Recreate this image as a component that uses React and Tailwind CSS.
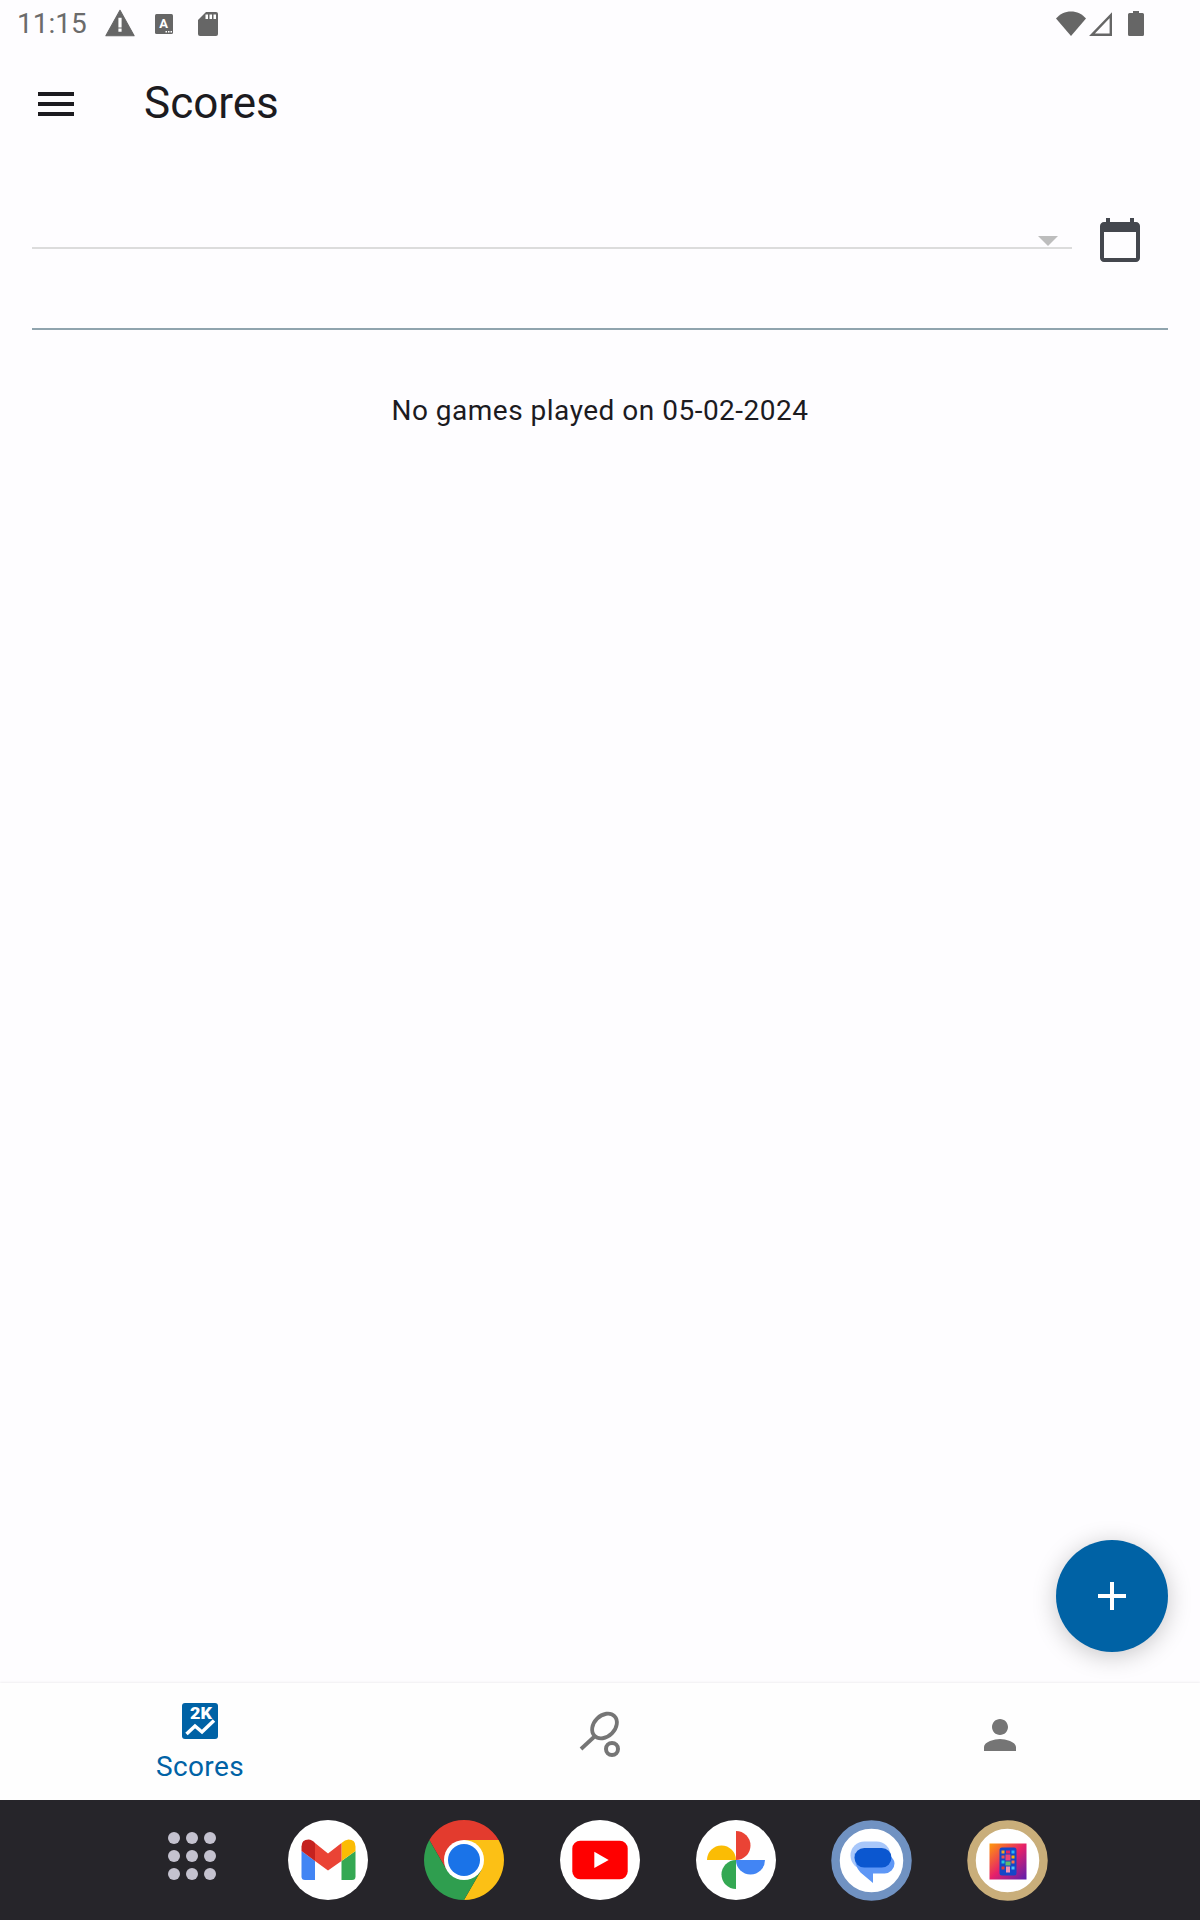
import React from "react";

// status bar icons
const StatusLeft = () => (
  <div className="flex items-center h-12 pl-[17px] text-[28px] text-[#6b6b6b]">
    <span className="w-[87px] leading-none">11:15</span>
    <svg width="32" height="32" viewBox="0 0 24 24" className="-mt-[3px]" fill="#666">
      <path stroke="#666" strokeLinejoin="round" strokeWidth="0.8" d="M1.400 21.600h21.200L12 2.400z" />
      <path fill="#fff" d="M10.800 8h2.400v7.400h-2.400zM10.800 16.200h2.400v2.400h-2.400z" />
    </svg>
    <svg width="18" height="20" viewBox="0 0 18 20" className="ml-[19px]">
      <rect width="18" height="20" rx="1.500" fill="#666" />
      <text x="8.500" y="14" fontSize="13" fontWeight="700" textAnchor="middle" fill="#fff" fontFamily="Roboto">A</text>
      <path fill="#fff" d="M10.500 17h1.500v1.500h-1.500zM13 17h1.500v1.500H13zM15.500 17h1.500v1.500h-1.500z" />
    </svg>
    <svg width="20" height="24" viewBox="0 0 20 24" className="ml-[25px]">
      <path fill="#666" d="M8 0h10a2 2 0 0 1 2 2v20a2 2 0 0 1-2 2H2a2 2 0 0 1-2-2V8z" />
      <path fill="#fff" d="M7.500 2.500h2.500V7H7.500zM11.500 2.500h2.500V7h-2.500zM15.500 2.500h2.500V7h-2.500z" />
    </svg>
  </div>
);

const StatusRight = () => (
  <div className="flex items-center h-12 pr-[56px]">
    <svg width="30" height="25" viewBox="0 0 30 25" className="-mt-[1px]">
      <path fill="#666" d="M0 7.500C4 3 9 0.500 15 0.500S26 3 30 7.500L15 25z" />
    </svg>
    <svg width="24" height="24" viewBox="0 0 24 24" className="ml-[3px]">
      <path fill="none" stroke="#666" strokeWidth="2.400" d="M21.800 3.200V22.800H2.900z" />
    </svg>
    <svg width="16" height="25" viewBox="0 0 16 25" className="ml-[15px] -mt-[1px]">
      <path fill="#666" d="M5 0h6v2h3.500A1.500 1.500 0 0 1 16 3.500V23.500A1.500 1.500 0 0 1 14.500 25H1.500A1.500 1.500 0 0 1 0 23.500V3.500A1.500 1.500 0 0 1 1.500 2H5z" />
    </svg>
  </div>
);

const DockIcon = ({ children, ringed }) => (
  <svg
    width={ringed ? 81 : 80}
    height={ringed ? 81 : 80}
    viewBox={ringed ? "-0.5 -0.5 81 81" : "0 0 80 80"}
    className={ringed ? "shrink-0 -ml-px" : "shrink-0"}
  >
    {children}
  </svg>
);

const Gmail = () => (
  <DockIcon>
    <circle cx="40" cy="40" r="40" fill="#fff" />
    <path fill="#4285f4" d="M13.500 31L27 41V60H17Q13.500 60 13.500 56.500z" />
    <path fill="#34a853" d="M53.500 41L67.500 31V56.500Q67.500 60 64 60H53.500z" />
    <path fill="#fbbc04" d="M53.500 23Q57 19.500 60.500 19.500Q67.500 19.500 67.500 26.500V31L53.500 41z" />
    <path fill="#c5221f" d="M13.500 31V26.500Q13.500 19.500 20.500 19.500Q24 19.500 27 23V41z" />
    <path fill="#ea4335" d="M27 23L40 33.500L53.500 23V41L40 50.500L27 41z" />
  </DockIcon>
);

const Chrome = () => (
  <DockIcon>
    <path fill="#e33b2e" d="M5.360 20A40 40 0 0 1 74.640 20H40L22.700 50z" />
    <path fill="#fcc015" d="M74.640 20A40 40 0 0 1 40 80L57.300 50L40 20z" />
    <path fill="#2f9e4f" d="M40 80A40 40 0 0 1 5.360 20L22.700 50H57.300z" />
    <circle cx="40" cy="40" r="20" fill="#fff" />
    <circle cx="40" cy="40" r="16" fill="#1a73e8" />
  </DockIcon>
);

const Youtube = () => (
  <DockIcon>
    <circle cx="40" cy="40" r="40" fill="#fff" />
    <rect x="12.300" y="20.700" width="55.400" height="38.600" rx="8" fill="#ff0000" />
    <path fill="#fff" d="M34.300 31.700L48.700 40L34.300 48z" />
  </DockIcon>
);

const Photos = () => (
  <DockIcon>
    <circle cx="40" cy="40" r="40" fill="#fff" />
    <path fill="#ea4335" d="M40 11A14.500 14.500 0 0 1 40 40z" />
    <path fill="#4285f4" d="M69 40A14.500 14.500 0 0 1 40 40z" />
    <path fill="#34a853" d="M40 69A14.500 14.500 0 0 1 40 40z" />
    <path fill="#fbbc04" d="M11 40A14.500 14.500 0 0 1 40 40z" />
  </DockIcon>
);

const Messages = () => (
  <DockIcon ringed>
    <circle cx="40" cy="40" r="36" fill="#fff" stroke="#7092c2" strokeWidth="8.500" />
    <rect x="19" y="21" width="40" height="28" rx="14" fill="#a8c7fa" />
    <path fill="#5e97f6" d="M23 33H49A14 10 0 0 1 63 43A10 10 0 0 1 53 53H41.500V62.500L29 52Q23 46 23 33z" />
    <rect x="23" y="27.500" width="37" height="19.500" rx="9.750" fill="#0b57d0" />
  </DockIcon>
);

const PhoneApp = () => (
  <DockIcon ringed>
    <defs>
      <linearGradient id="appBg" x1="0" y1="0" x2="1" y2="1">
        <stop offset="0" stopColor="#ff9a0a" />
        <stop offset="0.5" stopColor="#e6206a" />
        <stop offset="1" stopColor="#5a1fb0" />
      </linearGradient>
    </defs>
    <circle cx="40" cy="40" r="36" fill="#fff" stroke="#c9ae7a" strokeWidth="8.500" />
    <rect x="22" y="23" width="37" height="36" fill="url(#appBg)" />
    <rect x="32" y="27" width="17" height="28" rx="2.500" fill="#1546c8" />
    <rect x="34" y="30" width="3" height="3" fill="#f5a623" />
    <rect x="38.500" y="30" width="4" height="3" fill="#e91e63" />
    <rect x="44" y="30" width="3" height="3" fill="#29b6f6" />
    <rect x="34" y="35" width="3" height="3" fill="#ef5350" />
    <rect x="38" y="34" width="5" height="6" fill="#ec407a" />
    <rect x="44" y="35" width="3" height="3" fill="#ffb300" />
    <rect x="34" y="40" width="3" height="3" fill="#26c6da" />
    <rect x="38" y="41" width="5" height="4" fill="#66bb6a" />
    <rect x="44" y="40" width="3" height="3" fill="#ff7043" />
    <rect x="34" y="46" width="3" height="3" fill="#e53935" />
    <rect x="38.500" y="46" width="4" height="6" fill="#f48fb1" />
    <rect x="44" y="46" width="3" height="3" fill="#4fc3f7" />
  </DockIcon>
);

export default function App() {
  return (
    <div className="flex flex-col w-[1200px] h-[1920px] bg-[#fefdff] font-['Roboto',sans-serif] text-[#1c1b1f] overflow-hidden">
      <div className="flex justify-between shrink-0">
        <StatusLeft />
        <StatusRight />
      </div>

      {/* app bar */}
      <div className="flex items-center h-28 pl-8 shrink-0">
        <svg width="48" height="48" viewBox="0 0 24 24" fill="#1c1b1f">
          <path d="M3 18h18v-2H3v2zm0-5h18v-2H3v2zm0-7v2h18V6H3z" />
        </svg>
        <h1 className="ml-16 -mt-[2px] text-[44px] font-normal leading-none">Scores</h1>
      </div>

      <div className="relative flex-1 px-8">
        {/* date picker row */}
        <div className="flex items-start pt-14">
          <div className="flex items-end justify-end w-[1040px] h-[33px] pr-[14px] pb-px border-b-2 border-[#dcdcdc]">
            <svg width="20" height="10" viewBox="0 0 20 10">
              <path fill="#bdbdbd" d="M0 0h20L10 10z" />
            </svg>
          </div>
          <svg width="48" height="48" viewBox="0 0 24 24" fill="#44474e" className="ml-6">
            <path d="M20 3h-1V1h-2v2H7V1H5v2H4c-1.100 0-2 .9-2 2v16c0 1.100.9 2 2 2h16c1.100 0 2-.9 2-2V5c0-1.100-.9-2-2-2zm0 18H4V8h16v13z" />
          </svg>
        </div>
        <div className="h-0.5 mt-16 bg-[#90a4ae]" />

        <p className="mt-[63px] text-center text-[28px] leading-9 tracking-[0.5px]">No games played on 05-02-2024</p>

        <button className="absolute right-8 bottom-[31px] flex items-center justify-center w-28 h-28 rounded-full bg-[#0062a5] shadow-[0_4px_24px_rgba(0,0,0,0.22)]">
          <svg width="48" height="48" viewBox="0 0 24 24" fill="#fff">
            <path d="M19 13h-6v6h-2v-6H5v-2h6V5h2v6h6v2z" />
          </svg>
        </button>
      </div>

      {/* bottom nav */}
      <div className="grid grid-cols-3 h-[117px] shrink-0 bg-[#fefefe] shadow-[0_-1px_2px_rgba(0,0,0,0.06)]">
        <div className="flex flex-col items-center pt-5">
          <svg width="36" height="36" viewBox="0 0 36 36">
            <rect width="36" height="36" rx="3" fill="#0062a5" />
            <text x="19" y="16" fontSize="16.500" fontWeight="900" textAnchor="middle" textLength="22" lengthAdjust="spacingAndGlyphs" fill="#fff" fontFamily="Roboto">2K</text>
            <path fill="none" stroke="#fff" strokeWidth="3.500" d="M4.500 31L13 23L20 29L32 17.500" />
          </svg>
          <span className="mt-[10px] text-[28px] leading-9 tracking-[0.4px] text-[#0062a5]">Scores</span>
        </div>
        <div className="flex justify-center pt-7">
          <svg width="48" height="48" viewBox="0 0 48 48" fill="none" stroke="#757575">
            <ellipse cx="28.500" cy="15" rx="14" ry="10.500" strokeWidth="3.800" transform="rotate(-45 28.500 15)" />
            <path strokeWidth="3.800" d="M5 38L18 26" />
            <circle cx="36" cy="38" r="6" strokeWidth="4" />
          </svg>
        </div>
        <div className="flex justify-center pt-7">
          <svg width="48" height="48" viewBox="0 0 24 24" fill="#757575">
            <path d="M12 12c2.210 0 4-1.790 4-4s-1.790-4-4-4-4 1.790-4 4 1.790 4 4 4zm0 2c-2.670 0-8 1.340-8 4v2h16v-2c0-2.660-5.330-4-8-4z" />
          </svg>
        </div>
      </div>

      {/* launcher dock */}
      <div className="flex items-center h-[120px] pl-[168px] shrink-0 bg-[#26252a]">
        <div className="grid grid-cols-3 gap-[6px] mr-[72px] mb-2">
          {Array(9)
            .fill()
            .map((_, i) => (
              <div key={i} className="w-3 h-3 rounded-full bg-[#c4c2cf]" />
            ))}
        </div>
        <div className="flex gap-14">
          <Gmail />
          <Chrome />
          <Youtube />
          <Photos />
          <Messages />
          <PhoneApp />
        </div>
      </div>
    </div>
  );
}
